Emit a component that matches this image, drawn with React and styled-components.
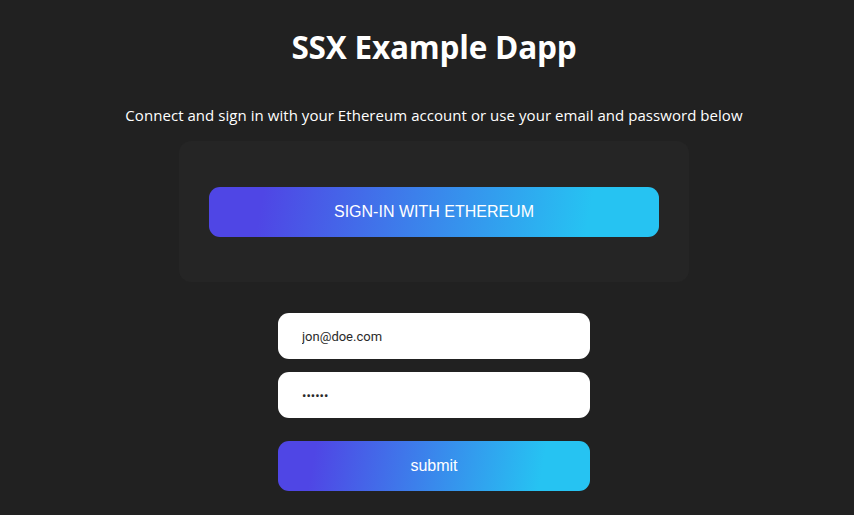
import React from "react";
import styled, { createGlobalStyle } from "styled-components";

const Global = createGlobalStyle`
  html, body { margin: 0; padding: 0; background: #212121; overflow: hidden; }
  body { font-family: "Open Sans", "Noto Sans", sans-serif; color: #fff; }
`;

const Page = styled.main`
  box-sizing: border-box;
  display: flex;
  flex-direction: column;
  align-items: center;
  min-height: 515px;
  padding-left: 14px;
  background: #212121;
`;

const Title = styled.h1`
  margin: 25px 0 0;
  font-family: "Open Sans", "Noto Sans", sans-serif;
  font-weight: 700;
  font-size: 31.5px;
  line-height: 44px;
  letter-spacing: -0.2px;
  color: #fff;
`;

const Subtitle = styled.p`
  margin: 35px 0 0;
  font-family: "Open Sans", "Noto Sans", sans-serif;
  font-size: 15px;
  line-height: 22px;
  letter-spacing: 0.05px;
  color: #fff;
`;

const Card = styled.section`
  box-sizing: border-box;
  width: 510px;
  height: 141px;
  margin-top: 15px;
  padding: 0 30px;
  background: #252525;
  border-radius: 12px;
  display: flex;
  align-items: center;
`;

const GradientButton = styled.button`
  width: 100%;
  height: 50px;
  border: none;
  border-radius: 11px;
  background: linear-gradient(100deg, #4f46e5 12%, #26c3f2 84%);
  color: #fff;
  font-family: "Liberation Sans", Arial, sans-serif;
  font-size: 16px;
  cursor: pointer;
  padding: 0;
`;

const Form = styled.form`
  display: flex;
  flex-direction: column;
  width: 312px;
  margin-top: 31px;
  gap: 13px;
`;

const Input = styled.input`
  box-sizing: border-box;
  height: 46px;
  width: 100%;
  border: none;
  border-radius: 11px;
  background: #fff;
  padding: 0 24px;
  font-family: Roboto, "Liberation Sans", sans-serif;
  font-size: 13px;
  color: #2a2a2a;
  outline: none;
`;

const SubmitWrap = styled.div`
  margin-top: 10px;
`;

export default function App() {
  return (
    <Page>
      <Global />
      <Title>SSX Example Dapp</Title>
      <Subtitle>
        Connect and sign in with your Ethereum account or use your email and password below
      </Subtitle>
      <Card>
        <GradientButton type="button">SIGN-IN WITH ETHEREUM</GradientButton>
      </Card>
      <Form onSubmit={(e) => e.preventDefault()}>
        <Input type="email" defaultValue="jon@doe.com" />
        <Input type="password" defaultValue="123456" />
        <SubmitWrap>
          <GradientButton type="submit">submit</GradientButton>
        </SubmitWrap>
      </Form>
    </Page>
  );
}
